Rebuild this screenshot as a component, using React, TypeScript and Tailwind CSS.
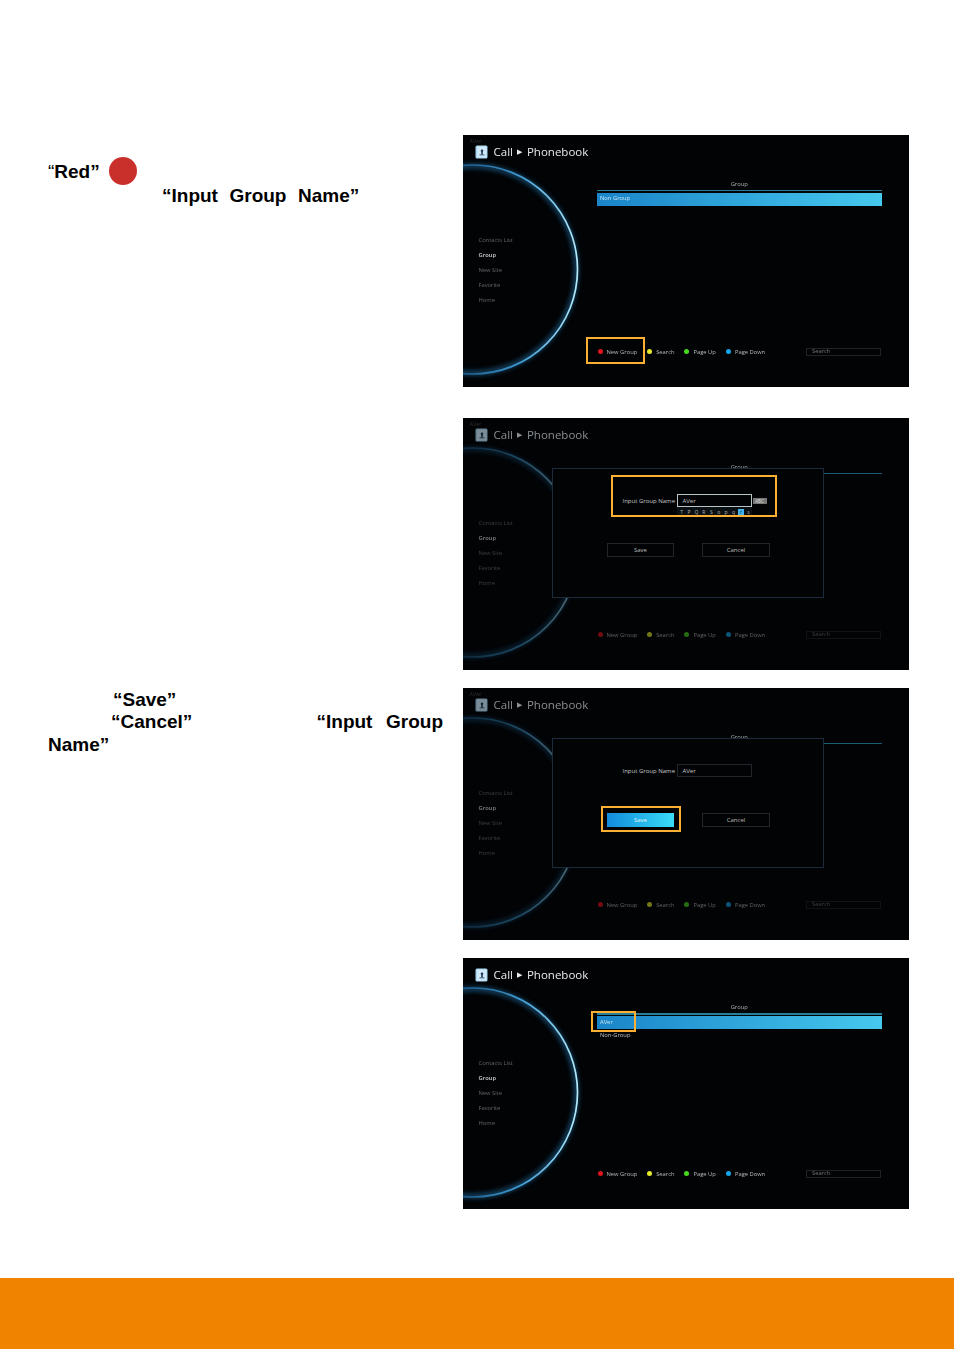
const sidebarItems = ["Contacts List", "Group", "New Site", "Favorite", "Home"]

const footerItems = [
  { label: "New Group", dot: "bg-[#e0141f]", width: "w-[49.7px]" },
  { label: "Search", dot: "bg-[#e6e92a]", width: "w-[37.3px]" },
  { label: "Page Up", dot: "bg-[#46d91e]", width: "w-[41.5px]" },
  { label: "Page Down", dot: "bg-[#15a5ec]", width: "w-[80px]" },
]

function Arc({ id, dim }: { id: string; dim: boolean }) {
  return (
    <svg
      className={`absolute inset-0 ${dim ? "opacity-45" : ""}`}
      width="446"
      height="252"
      viewBox="0 0 446 252"
      fill="none"
    >
      <defs>
        <linearGradient id={id} gradientUnits="userSpaceOnUse" x1="0" y1="0" x2="115" y2="0">
          <stop offset="0" stopColor="#1d5a8a" />
          <stop offset="0.5" stopColor="#3f9ad0" />
          <stop offset="1" stopColor="#b4ecfb" />
        </linearGradient>
        <filter id={`${id}-blur`} x="-30%" y="-30%" width="160%" height="160%">
          <feGaussianBlur stdDeviation="2.5" />
        </filter>
      </defs>
      <circle cx="10" cy="134.5" r="103.5" stroke="#2a86c4" strokeOpacity="0.6" strokeWidth="4" filter={`url(#${id}-blur)`} />
      <circle cx="10" cy="134.5" r="104.5" stroke={`url(#${id})`} strokeWidth="1.7" />
    </svg>
  )
}

function BookIcon({ dim }: { dim: boolean }) {
  return (
    <svg width="13" height="14" viewBox="0 0 13 14" className={dim ? "opacity-60" : ""}>
      <rect x="0.5" y="0.5" width="12" height="13" rx="1.5" fill="#a5d6f4" />
      <rect x="2" y="1.5" width="9.5" height="11" rx="0.5" fill="#cfe9fa" />
      <circle cx="7" cy="5.8" r="1.3" fill="#1d3a55" />
      <rect x="6.2" y="6.5" width="1.6" height="3" fill="#1d3a55" />
      <rect x="4.5" y="9.5" width="5" height="0.8" fill="#1d3a55" />
    </svg>
  )
}

function Highlight({ className }: { className: string }) {
  return <div className={`absolute border-[2.5px] border-[#fbb034] ${className}`} />
}

function GroupDialog({ keyboard, saveActive }: { keyboard: boolean; saveActive: boolean }) {
  return (
    <div className="absolute left-[89px] top-[50px] w-[272px] h-[130px] border border-[#1c2b3a] bg-[#020304] text-[6px] leading-[8px]">
      <div className="relative flex items-center h-[13px] mt-[25px] pl-[62px]">
        <span className="w-[60px] text-right text-[#c8c8c8] whitespace-nowrap">Input Group Name</span>
        <div
          className={`ml-[1.5px] w-[75px] h-[13px] flex items-center pl-[5px] text-[#c8c8c8] border ${
            keyboard ? "border-[#b8c4c8]" : "border-[#20262c]"
          }`}
        >
          AVer
        </div>
        {keyboard && (
          <>
            <div className="ml-[1px] w-[14px] h-[6px] bg-[#777] text-[#ddd] text-[4.5px] leading-[6px] text-center">ABC</div>
            <div className="absolute left-[123.5px] top-[13px] w-[75px] h-[10px] flex items-center pl-[2px] gap-[1.2px] bg-[#0b1014] text-[#b5b5b5] text-[5px] leading-[6px]">
              {["T", "P", "Q", "R", "S", "o", "p", "q", "r", "s"].map((c) => (
                <span key={c} className={`w-[6.9px] text-center ${c === "r" ? "bg-[#42b4ee] text-[#0b3146]" : ""}`}>
                  {c}
                </span>
              ))}
            </div>
          </>
        )}
      </div>
      <div className="flex mt-[36px] pl-[54px] gap-[28px] text-center">
        <div
          className={`w-[67px] h-[14px] ${
            saveActive
              ? "leading-[14px] bg-gradient-to-r from-[#138bdc] to-[#3adcf7] text-[#e8f6fd]"
              : "leading-[13px] border border-[#1f262c] text-[#bbb]"
          }`}
        >
          Save
        </div>
        <div className="w-[68px] h-[14px] leading-[12px] border border-[#1f262c] text-[#bbb]">Cancel</div>
      </div>
    </div>
  )
}

function Screen({
  id,
  height = 252,
  dim = false,
  rows = [],
  keyboard = false,
  saveActive = false,
  ghost = true,
  highlight,
}: {
  id: string
  height?: number
  dim?: boolean
  rows?: string[]
  keyboard?: boolean
  saveActive?: boolean
  ghost?: boolean
  highlight: string
}) {
  return (
    <div
      className={`relative w-[446px] overflow-hidden bg-[#020305] font-normal leading-none ${height === 252 ? "h-[252px]" : "h-[251px]"}`}
      style={{ fontFamily: '"Open Sans", "Noto Sans", sans-serif' }}
    >
      <div className="absolute inset-0 blur-[0.35px]">
        <Arc id={id} dim={dim} />
        {ghost && <span className="absolute left-[6.5px] top-[4px] text-[5.5px] text-[#2e2e2e]">AVer</span>}
        <div className="relative h-[33px] flex items-center pl-[11.5px]">
          <BookIcon dim={dim} />
          <span className={`ml-[6px] text-[11.5px] flex items-center ${dim ? "text-[#8a8f92]" : "text-[#e8ecee]"}`}>
            Call
            <span className="text-[7px] mx-[4.5px]">&#9654;</span>
            Phonebook
          </span>
        </div>
        <div className={`relative flex ${height === 252 ? "h-[175px]" : "h-[174px]"}`}>
          <div className={`w-[134px] pl-[15.5px] pt-[64.5px] flex flex-col text-[5.8px] leading-[15.2px] ${dim ? "opacity-60" : ""}`}>
            {sidebarItems.map((item) => (
              <span key={item} className={item === "Group" ? "text-[#d6d6d6] font-semibold" : "text-[#666]"}>
                {item}
              </span>
            ))}
          </div>
          <div className="w-[284.5px] pt-[12px]">
            <div className="text-center text-[5.8px] leading-[8px] text-[#b5b5b5]">Group</div>
            <div className={`mt-[2px] ${dim ? "bg-[#1b5d75]" : "bg-[#247f9c]"} ${rows.length > 1 ? "h-[2px]" : "h-[1px]"}`} />
            {!dim && (
              <div className={`${rows.length > 1 ? "mt-[1px]" : "mt-[1.5px]"} h-[13px] flex items-center pl-[3px] bg-gradient-to-r from-[#1a84c8] to-[#46c9ee] text-[5.8px] text-[#c9e6f3]`}>
                {rows[0] ?? "Non Group"}
              </div>
            )}
            {rows.slice(1).map((row) => (
              <div key={row} className="h-[13px] flex items-center pl-[3px] text-[5.8px] text-[#c0c0c0]">
                {row}
              </div>
            ))}
          </div>
        </div>
        <div className={`relative h-[18px] flex items-center pl-[134.5px] text-[5.8px] ${dim ? "opacity-50" : ""}`}>
          {footerItems.map((item) => (
            <div key={item.label} className={`flex items-center shrink-0 ${item.width}`}>
              <span className={`w-[5px] h-[5px] rounded-full mr-[4px] ${item.dot}`} />
              <span className="mt-[1.5px] text-[#bbb] whitespace-nowrap">{item.label}</span>
            </div>
          ))}
          <div className="w-[75px] h-[7.5px] flex items-center pl-[5px] border border-[#222] text-[#777]">Search</div>
        </div>
        {dim && <GroupDialog keyboard={keyboard} saveActive={saveActive} />}
      </div>
      <Highlight className={highlight} />
    </div>
  )
}

export default function App() {
  return (
    <div
      className="w-[954px] bg-white text-black font-bold text-[19px] leading-[23px]"
      style={{ fontFamily: '"Liberation Sans", Arial, sans-serif' }}
    >
      <div className="h-[1278px] pt-[135px] pl-[48px] pr-[45px] flex flex-col">
        <div className="flex justify-between">
          <div className="pt-[13px]">
            <div className="flex items-center h-[46px]">
              <span>
                <span className="font-normal">“</span>Red”
              </span>
              <span className="ml-[9px] w-[28px] h-[28px] rounded-full bg-[#c9302c]" />
            </div>
            <div className="pl-[114px] -mt-[10px] whitespace-pre [word-spacing:0.5px]">“Input  Group  Name”</div>
          </div>
          <Screen id="arc-a" highlight="left-[123px] top-[202px] w-[59px] h-[27px]" />
        </div>
        <div className="flex justify-end mt-[31px]">
          <Screen id="arc-b" dim keyboard highlight="left-[148px] top-[57px] w-[166px] h-[42px]" />
        </div>
        <div className="flex justify-between mt-[18px]">
          <div className="w-[395px]">
            <div className="pl-[65px]">“Save”</div>
            <div className="flex justify-between whitespace-pre pl-[63px] -mt-[1px]">
              <span>“Cancel”</span>
              <span className="[word-spacing:1.5px]">“Input  Group</span>
            </div>
            <div>Name”</div>
          </div>
          <Screen id="arc-c" dim saveActive highlight="left-[138px] top-[118px] w-[80px] h-[26px]" />
        </div>
        <div className="flex justify-end mt-[18px]">
          <Screen id="arc-d" height={251} ghost={false} rows={["AVer", "Non-Group"]} highlight="left-[128px] top-[53px] w-[45px] h-[21px]" />
        </div>
      </div>
      <div className="h-[71px] bg-[#f08300]" />
    </div>
  )
}
